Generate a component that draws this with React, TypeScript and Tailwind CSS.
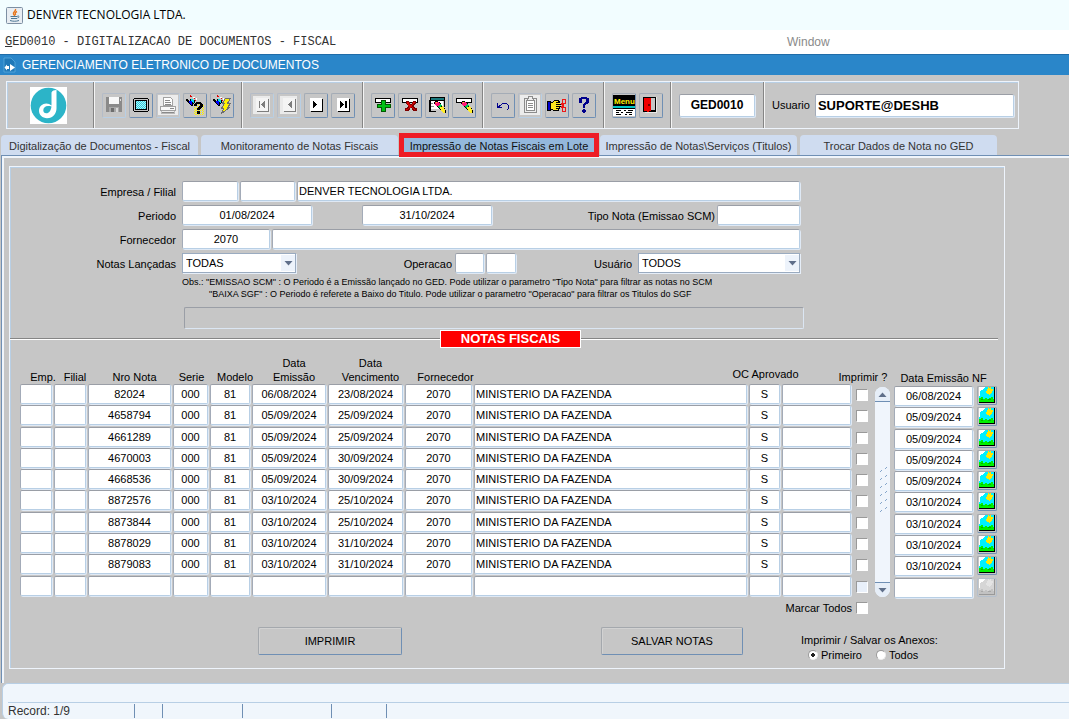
import React from "react";

type Row = {
  nota: string;
  emissao: string;
  vencimento: string;
};

const rows: Row[] = [
  { nota: "82024", emissao: "06/08/2024", vencimento: "23/08/2024" },
  { nota: "4658794", emissao: "05/09/2024", vencimento: "25/09/2024" },
  { nota: "4661289", emissao: "05/09/2024", vencimento: "25/09/2024" },
  { nota: "4670003", emissao: "05/09/2024", vencimento: "30/09/2024" },
  { nota: "4668536", emissao: "05/09/2024", vencimento: "30/09/2024" },
  { nota: "8872576", emissao: "03/10/2024", vencimento: "25/10/2024" },
  { nota: "8873844", emissao: "03/10/2024", vencimento: "25/10/2024" },
  { nota: "8878029", emissao: "03/10/2024", vencimento: "31/10/2024" },
  { nota: "8879083", emissao: "03/10/2024", vencimento: "31/10/2024" },
  { nota: "", emissao: "", vencimento: "" },
];

const fieldLook =
  "block min-w-0 rounded-[2px] border border-t-[#9a9ea6] border-l-[#a3abb8] border-r-[#b8cfe5] border-b-[#b8cfe5] bg-white shadow-[1px_1px_0_#dfe9f5] outline-none";

function Field({
  label,
  value = "",
  className = "",
  id,
}: {
  label?: string;
  value?: string;
  className?: string;
  id?: string;
}) {
  return (
    <input
      id={id}
      aria-label={label}
      defaultValue={value}
      className={`${fieldLook} h-[20px] px-[1px] ${className}`}
    />
  );
}

function Svg({ children, size = 20 }: { children: React.ReactNode; size?: number }) {
  return (
    <svg width={size} height={size} viewBox={`0 0 ${size} ${size}`} shapeRendering="crispEdges" aria-hidden="true">
      {children}
    </svg>
  );
}

function ToolButton({ label, off = false, children }: { label: string; off?: boolean; children: React.ReactNode }) {
  const look = off
    ? "border-t-[#b4bcc8] border-l-[#b4bcc8] border-r-[#b8cfe5] border-b-[#b8cfe5]"
    : "border-t-[#a4acb6] border-l-[#a4acb6] border-r-[#6f8fb4] border-b-[#6f8fb4]";
  return (
    <button
      type="button"
      aria-label={label}
      className={`flex h-[25px] w-[24px] shrink-0 items-center justify-center rounded-[2px] border ${look}`}
    >
      {children}
    </button>
  );
}

const SaveIcon = () => (
  <Svg>
    <path d="M2 2h15l1 1v14H2z" fill="#8a8a8a" />
    <rect x="5" y="2" width="10" height="7" fill="#f8f8f8" />
    <rect x="16" y="4" width="1" height="2" fill="#dcdcdc" />
    <rect x="5" y="12" width="10" height="5" fill="#a8a8a8" />
    <rect x="7" y="13" width="3" height="4" fill="#6e6e6e" />
    <rect x="12" y="13" width="2" height="4" fill="#d8d8d8" />
  </Svg>
);
const ScreenIcon = () => (
  <Svg>
    <path d="M3 3h14v1h1v12h-1v1H3v-1H2V4h1z" fill="#000" />
    <rect x="3" y="4" width="14" height="12" fill="#c6c6c6" />
    <rect x="4" y="5" width="12" height="10" fill="#000" />
    <rect x="5" y="6" width="10" height="8" fill="#b4f2f6" />
    <path d="M5 6.500h10M5 8.500h10M5 10.500h10M5 12.500h10" stroke="#29cfe0" strokeDasharray="1 1" />
    <path d="M6 7.500h9M6 9.500h9M6 11.500h9M6 13.500h9" stroke="#29cfe0" strokeDasharray="1 1" />
  </Svg>
);
const PrintIcon = () => (
  <Svg>
    <rect width="20" height="20" fill="#ececec" />
    <path d="M5.500 2.500h7l2 2v6h-9z" fill="#fff" stroke="#a2a2a2" />
    <path d="M7 5.500h5M7 7.500h6M7 9.500h6" stroke="#8a8a8a" />
    <path d="M2.500 11.500h15v4h-15z" fill="#fafafa" stroke="#a2a2a2" />
    <path d="M12 13.500h4M4 17.500h12" stroke="#8a8a8a" />
    <path d="M3.500 16v2.500h13V16" fill="none" stroke="#b8b8b8" />
  </Svg>
);
const Torch = () => (
  <>
    <path d="M1 4h2v1h1v1h1v-2h3v1h2v3h-1v1H8v2H6v-1H5V9H4V8H3V7H2V6H1z" fill="#000" />
    <path d="M4 6h3v4H6V9H5V8H4z" fill="#0000ff" />
    <path d="M6 4h2v1h1v3H8V7H7V6H6z" fill="#00dbe8" />
    <path d="M5 0h1v1h1v1H5zM9 3h1v1H9zM10 5h1v1h-1z" fill="#e00000" />
    <path d="M8 2h2v1H8zM11 3h1v2h-1z" fill="#fff" />
  </>
);
const QueryIcon = () => (
  <Svg>
    <path d="M11.500 9v11M13.500 9v11M15.500 9v11M17.500 9v11M9.500 12v8" stroke="#fff200" strokeDasharray="1 1" />
    <path d="M18.500 10v10M10.500 13v7" stroke="#fff200" strokeDasharray="1 1" />
    <Torch />
    <path d="M9 9h1V8h1V7h5v1h1v1h1v3h-1v1h-1v1h-1v1h-3v-2h1v-1h1v-1h1v-2h-3v2H9zM12 16h3v3h-3z" fill="#000" />
  </Svg>
);
const ExecuteIcon = () => (
  <Svg>
    <Torch />
    <path d="M13.500 3.500h5l-3 5h3l-3 4h2l-8 6 2-5h-2l3-5h-2z" fill="#fff200" stroke="#6e6e6e" />
  </Svg>
);

function NavIcon({ kind, off }: { kind: "first" | "prev" | "next" | "last"; off?: boolean }) {
  const c = off ? "#7d7d7d" : "#000";
  const bar =
    kind === "first" ? <path d="M7 6h1v7H7z" fill={c} /> : kind === "last" ? <path d="M12 6h2v7h-2z" fill={c} /> : null;
  const tri = kind === "first" || kind === "prev" ? "M13 6v7l-4-3.500z" : "M7 6v7l4-3.500z";
  return (
    <Svg>
      {off && <rect x="1" y="1" width="17" height="18" fill="#eaeaea" />}
      <rect x="5" y="4" width="12" height="13" fill={c} />
      <rect x="4" y="3" width="12" height="13" fill={off ? "#f4f4f4" : "#fff"} />
      <path d={tri} fill={c} />
      {bar}
    </Svg>
  );
}

const Strip = () => (
  <>
    <rect x="2" y="3" width="16" height="5" fill="#000" />
    <rect x="3" y="4" width="14" height="3" fill="#fff" />
  </>
);
const InsertIcon = () => (
  <Svg>
    <Strip />
    <path d="M8 5h5v4h5v4h-5v4H8v-4H4V9h4z" fill="#005a00" />
    <path d="M9 6h3v4h5v2h-5v4H9v-4H5v-2h4z" fill="#00c014" />
  </Svg>
);
const DeleteIcon = () => (
  <Svg>
    <Strip />
    <path d="M6 6h3v1h1v2h2V7h1V6h3v3h-1v1h-1v2h1v1h2v3h-4v-1h-1v-2h-2v2H9v1H5v-3h2v-1h1v-2H7V9H6z" fill="#7c0000" />
    <path d="M7 7h2v2h1v1h2V9h1V7h2v1h-1v1h-1v1h-1v2h1v1h1v1h1v1h-1v-1h-1v-1h-1v-1h-1v1H9v1H8v1H6v-1h2v-1h1v-2H8V9H7z" fill="#dc0000" />
  </Svg>
);
const Eraser = () => (
  <>
    <path d="M8 6h3v1h2v1h1v2h1v1h1v1h1v1h1v2h1v3h-3v-1h-1v-1h-1v-1h-1v-1h-1v-1h-1v-1h-1v-1H9v-1H8V9H7V7h1z" fill="#000" />
    <path d="M8 7h4v1h1v2h-1v1H9v-1H8z" fill="#ff1478" />
    <path d="M11 11h1v-1h1V9h1v1h1v1h-1v1h-1v1h-1v-1h-1z" fill="#00c850" />
    <path d="M13 12h2v-1h1v1h1v2h1v4h-2v-1h-1v-1h-1v-2h-1z" fill="#ffee28" />
    <path d="M9 7h1v1H9z" fill="#ffe400" />
  </>
);
const ClearBlockIcon = () => (
  <Svg>
    <path d="M3 2h15v10h-1V6H4v10h5v1H2V5h1z" fill="#000" />
    <rect x="4" y="3" width="13" height="2" fill="#18787c" />
    <rect x="4" y="6" width="12" height="8" fill="#fff" />
    <path d="M4 8h2v1H4zM4 11h3v1H4z" fill="#888" />
    <Eraser />
  </Svg>
);
const ClearRecordIcon = () => (
  <Svg>
    <Strip />
    <Eraser />
  </Svg>
);
const UndoIcon = () => (
  <Svg>
    <path d="M4 8h1v3h1v-1h2v1H7v1h2v1H4zM8 9h1V8h5v1h1v1h1v4h-1v1h-1v-1h1v-4h-1V9H9v1H8z" fill="#00008c" />
  </Svg>
);
const ClipboardIcon = () => (
  <Svg>
    <rect width="20" height="20" fill="#ececec" />
    <rect x="4.500" y="3.500" width="12" height="14" rx="1" fill="none" stroke="#8c8c8c" />
    <rect x="6.500" y="5.500" width="8" height="10" fill="#fff" stroke="#8c8c8c" />
    <path d="M7.500 5.500h6v-2h-1v-2h-4v2h-1z" fill="#eee" stroke="#8c8c8c" />
    <path d="M8 8.500h5M8 10.500h5M8 12.500h5" stroke="#8c8c8c" />
  </Svg>
);
const HandIcon = () => (
  <Svg>
    <path d="M0 6h4v10H0z" fill="#000" />
    <path d="M1 7h2v8H1z" fill="#0000d0" />
    <path d="M4 7h2V6h1V5h5v1h1v3h1v1h-1v4h-1v2H6v-1H4z" fill="#000" />
    <path d="M4 8h2V7h1V6h4v1H9v1h4v1H9v1h4v1H9v1h3v1H9v1h2v1H6v-1H4z" fill="#ffe81e" />
    <path d="M13 9h2v1h-2zM13 11h2v1h-2z" fill="#000" />
    <path d="M15.500 4.500h3v4h-3zM15.500 12.500h3v4h-3zM14 8l3 4M14 13l3-4" fill="none" stroke="#ee1818" />
  </Svg>
);
const HelpIcon = () => (
  <Svg>
    <path d="M5 3h2V2h6v1h2v5h-1v1h-2v1h-1v3H9V9h1V8h1V7h1V4H8v4H5zM8 15h1v-1h2v1h1v2h-1v1H9v-1H8z" fill="#00008c" />
  </Svg>
);
const MenuIcon = () => (
  <svg width="22" height="21" viewBox="0 0 22 21" className="shrink-0" aria-hidden="true">
    <rect width="22" height="11" fill="#000" />
    <rect y="11" width="22" height="10" fill="#fff" />
    <rect y="11" width="22" height="2" fill="#00c8c8" />
    <text x="1" y="9" fontSize="8" fontWeight="700" fontFamily="Liberation Sans, sans-serif" fill="#fff200">
      Menu
    </text>
    <path d="M0 13.500h22M3 15.500h5M11 15.500h2M15 15.500h5M3 17.500h3M8 17.500h2M13 17.500h6M3 19.500h5M12 19.500h2M16 19.500h3" stroke="#000" shapeRendering="crispEdges" />
  </svg>
);
const ExitIcon = () => (
  <Svg>
    <rect x="2" y="2" width="13" height="15" fill="#000" />
    <rect x="9" y="3" width="5" height="12" fill="#c6c6c6" />
    <path d="M3 3h7v13H8v1H6v-1H3z" fill="#f00000" />
    <path d="M7 9h2v2H7z" fill="#700000" />
    <path d="M15 2h1v16H4v-1h11z" fill="#e8e8e8" />
  </Svg>
);

function PictureIcon({ off }: { off: boolean }) {
  return (
    <Svg size={16}>
      <rect width="16" height="16" fill={off ? "#999" : "#000"} />
      <rect width="15" height="15" fill={off ? "#d6d6d6" : "#00f0ff"} />
      <path d="M0 0h6v1H5v1H4v1H2v1H1v2H0zM0 6h1v3H0z" fill="#fff" />
      <path d="M8 2h1V0h1v1h1V0h1v2h2v2h-1v2h-1v1h-1v1h-1V7H8V6H7V4h1z" fill={off ? "#e4e4e4" : "#ffe800"} />
      <path d="M0 11h2v-1h2v2h2v-1h2v1h2v-1h2v-1h2v2h1v3H0z" fill={off ? "#c2c2c2" : "#00f000"} />
      <path d="M2 12h2v1H2zM9 12h3v1H9z" fill={off ? "#a8a8a8" : "#00b400"} />
    </Svg>
  );
}

function JavaIcon() {
  return (
    <svg width="17" height="17" viewBox="0 0 17 17" aria-hidden="true">
      <rect x=".5" y=".5" width="16" height="16" rx="1" fill="#e8edf2" stroke="#7d8fa3" />
      <path d="M9.500 2c1 2-3 3-2 5 .4.800 1.200 1 1 2M11 4.500c-2 1-2.200 2-1.200 3.500" fill="none" stroke="#e8761c" strokeWidth="1.400" />
      <path d="M4.500 9.500h7M5 11.500h6M4 13.500c3 1 6 1 9 0M11.500 9c2-.4 2 1.600 0 2" fill="none" stroke="#4d7896" />
    </svg>
  );
}

function DenverLogo() {
  return (
    <svg width="37" height="37" viewBox="0 0 37 37" role="img" aria-label="Denver">
      <rect width="37" height="37" fill="#fff" />
      <circle cx="18.500" cy="18.500" r="17.800" fill="#2cb4c8" />
      <path d="M21.500 5.500c1-2 3-2.600 5-2.500v18.500c0 5-3.500 9.700-9.500 9.700-4.500 0-8-3-8-7.400 0-4.300 3.500-7.300 7.300-7.300 2 0 3.700.7 5.200 2z" fill="#fff" />
      <path d="M21.500 19.500c-.6 4-2.500 6.800-5.200 6.800-1.900 0-3-1.300-3-3 0-2.400 2-4.300 4.700-4.300 1.300 0 2.500.1 3.500.5z" fill="#2cb4c8" />
    </svg>
  );
}

function Caret({ up = false }: { up?: boolean }) {
  return (
    <svg width="9" height="5" viewBox="0 0 9 5" aria-hidden="true">
      <path d={up ? "M0.500 5h8L4.500 0.500z" : "M0.500 0h8L4.500 4.500z"} fill="#5f6f8a" />
    </svg>
  );
}

function SelectBox({ id, value, className }: { id: string; value: string; className: string }) {
  return (
    <div className={`relative ${className}`}>
      <select
        id={id}
        defaultValue={value}
        className="block h-[20px] w-full appearance-none border border-[#9aabc0] bg-white pl-[3px] shadow-[1px_1px_0_#e6eef8] outline-none"
      >
        <option>{value}</option>
      </select>
      <span className="pointer-events-none absolute top-[2px] right-[1px] flex h-[16px] w-[14px] items-center justify-center bg-[#edf3fb]">
        <Caret />
      </span>
    </div>
  );
}

const tabs = [
  "Digitalização de Documentos - Fiscal",
  "Monitoramento de Notas Fiscais",
  "Impressão de Notas Fiscais em Lote",
  "Impressão de Notas\\Serviços (Titulos)",
  "Trocar Dados de Nota no GED",
];

const groupLook = "flex items-center gap-[3px] border-l border-[#858585] pl-[8px] shadow-[inset_1px_0_0_#f4f4f4]";
const labelLook = "pt-[3px] text-right whitespace-nowrap";
const actionLook =
  "h-[28px] rounded-[2px] border border-t-[#a4a8ad] border-l-[#a4a8ad] border-r-[#6f8fb4] border-b-[#6f8fb4] shadow-[inset_1px_1px_0_#d2d2d2]";
const checkLook =
  "block size-[12px] appearance-none border border-t-[#999] border-l-[#999] border-r-white border-b-white checked:bg-[#5f6f8a]";
const radioLook =
  "size-[10px] appearance-none rounded-full border border-t-[#999] border-r-[#eee] border-b-[#eee] border-l-[#999] bg-white checked:bg-[radial-gradient(circle,#222_0_2px,#fff_2px)]";

function Head({ children, className = "" }: { children: React.ReactNode; className?: string }) {
  return (
    <th className={`p-0 align-bottom font-normal ${className}`}>
      <div className="flex justify-center text-center leading-[14px] whitespace-nowrap">{children}</div>
    </th>
  );
}

function Toolbar() {
  return (
    <div className="mt-[6px] mr-[50px] ml-[6px] flex h-[48px] border border-[#eef4fc] shadow-[inset_1px_1px_0_#b8cfe5]" role="toolbar" aria-label="Ferramentas">
      <div className="flex w-[86px] shrink-0 items-center justify-center pr-[4px]">
        <DenverLogo />
      </div>
      <div className={`${groupLook} pr-[7px]`}>
        <ToolButton label="Salvar" off><SaveIcon /></ToolButton>
        <ToolButton label="Tela"><ScreenIcon /></ToolButton>
        <ToolButton label="Imprimir tela" off><PrintIcon /></ToolButton>
        <ToolButton label="Entrar consulta"><QueryIcon /></ToolButton>
        <ToolButton label="Executar consulta"><ExecuteIcon /></ToolButton>
      </div>
      <div className={`${groupLook} pr-[7px]`}>
        <ToolButton label="Primeiro registro" off><NavIcon kind="first" off /></ToolButton>
        <ToolButton label="Registro anterior" off><NavIcon kind="prev" off /></ToolButton>
        <ToolButton label="Próximo registro"><NavIcon kind="next" /></ToolButton>
        <ToolButton label="Último registro"><NavIcon kind="last" /></ToolButton>
      </div>
      <div className={`${groupLook} pr-[6px]`}>
        <ToolButton label="Inserir"><InsertIcon /></ToolButton>
        <ToolButton label="Excluir"><DeleteIcon /></ToolButton>
        <ToolButton label="Limpar bloco"><ClearBlockIcon /></ToolButton>
        <ToolButton label="Limpar registro"><ClearRecordIcon /></ToolButton>
      </div>
      <div className={`${groupLook} pr-[7px]`}>
        <ToolButton label="Desfazer"><UndoIcon /></ToolButton>
        <ToolButton label="Lista" off><ClipboardIcon /></ToolButton>
        <ToolButton label="Editar"><HandIcon /></ToolButton>
        <ToolButton label="Ajuda"><HelpIcon /></ToolButton>
      </div>
      <div className={`${groupLook} pr-[7px]`}>
        <ToolButton label="Menu"><MenuIcon /></ToolButton>
        <ToolButton label="Sair"><ExitIcon /></ToolButton>
      </div>
      <div className={`${groupLook} pr-[8px]`}>
        <input aria-label="Programa" defaultValue="GED0010" className={`${fieldLook} h-[23px] w-[76px] text-center text-[12px] font-bold`} />
      </div>
      <div className={`${groupLook} min-w-0 flex-1 pr-[4px]`}>
        <label htmlFor="usuario-logado">Usuario</label>
        <input id="usuario-logado" defaultValue="SUPORTE@DESHB" className={`${fieldLook} ml-[2px] h-[23px] w-0 flex-1 px-[2px] text-[13px] font-bold`} />
      </div>
    </div>
  );
}

function Filters() {
  return (
    <div className="flex flex-col gap-[4px] pt-[14px] pr-[204px]">
      <div className="flex h-[20px]">
        <label htmlFor="empresa" className={`${labelLook} mr-[6px] w-[166px]`}>Empresa / Filial</label>
        <Field id="empresa" className="w-[56px]" />
        <Field label="Filial" className="ml-[2px] w-[55px]" />
        <Field label="Nome da empresa" value="DENVER TECNOLOGIA LTDA." className="ml-[2px] flex-1" />
      </div>
      <div className="flex h-[20px]">
        <label htmlFor="periodo" className={`${labelLook} mr-[6px] w-[166px]`}>Periodo</label>
        <Field id="periodo" value="01/08/2024" className="w-[130px] text-center" />
        <Field label="Periodo final" value="31/10/2024" className="ml-[50px] w-[130px] text-center" />
        <label htmlFor="tipo" className={`${labelLook} mr-[2px] ml-auto`}>Tipo Nota (Emissao SCM)</label>
        <Field id="tipo" className="w-[83px]" />
      </div>
      <div className="flex h-[20px]">
        <label htmlFor="fornecedor" className={`${labelLook} mr-[6px] w-[166px]`}>Fornecedor</label>
        <Field id="fornecedor" value="2070" className="w-[88px] text-center" />
        <Field label="Nome do fornecedor" className="ml-[2px] flex-1" />
      </div>
      <div className="flex h-[20px]">
        <label htmlFor="lancadas" className={`${labelLook} mr-[6px] w-[166px]`}>Notas Lançadas</label>
        <SelectBox id="lancadas" value="TODAS" className="w-[114px]" />
        <label htmlFor="operacao" className={`${labelLook} mr-[3px] w-[156px]`}>Operacao</label>
        <Field id="operacao" className="w-[29px]" />
        <Field label="Operacao final" className="ml-[2px] w-[30px]" />
        <label htmlFor="usuario" className={`${labelLook} mr-[6px] ml-auto`}>Usuário</label>
        <SelectBox id="usuario" value="TODOS" className="w-[162px]" />
      </div>
    </div>
  );
}

function NotesTable() {
  return (
    <div className="mt-[8px] flex h-[241px] pr-[5px] pl-[10px]">
      <div className="min-w-0 flex-1">
        <table className="h-[241px] w-full table-fixed border-collapse">
          <colgroup>
            <col className="w-[34px]" />
            <col className="w-[34px]" />
            <col className="w-[85px]" />
            <col className="w-[37px]" />
            <col className="w-[42px]" />
            <col className="w-[76px]" />
            <col className="w-[77px]" />
            <col className="w-[69px]" />
            <col />
            <col className="w-[33px]" />
            <col className="w-[71px]" />
            <col className="w-[20px]" />
          </colgroup>
          <thead>
            <tr className="h-[28px]">
              <Head className="pl-[12px]">Emp.</Head>
              <Head className="pl-[8px]">Filial</Head>
              <Head className="pl-[8px]">Nro Nota</Head>
              <Head>Serie</Head>
              <Head className="pl-[8px]">Modelo</Head>
              <Head className="pl-[8px]">Data<br />Emissão</Head>
              <Head className="pl-[8px]">Data<br />Vencimento</Head>
              <Head className="pl-[12px]">Fornecedor</Head>
              <th aria-label="Nome do fornecedor" />
              <Head className="pb-[3px]">OC Aprovado</Head>
              <th aria-label="Situação" />
              <Head>Imprimir ?</Head>
            </tr>
          </thead>
          <tbody>
            {rows.map((r, i) => {
              const on = r.nota !== "";
              const cells = [
                { v: "", l: "Empresa" },
                { v: "", l: "Filial" },
                { v: r.nota, l: "Nro Nota" },
                { v: on ? "000" : "", l: "Serie" },
                { v: on ? "81" : "", l: "Modelo" },
                { v: r.emissao, l: "Data Emissão" },
                { v: r.vencimento, l: "Data Vencimento" },
                { v: on ? "2070" : "", l: "Fornecedor" },
                { v: on ? "MINISTERIO DA FAZENDA" : "", l: "Nome do fornecedor" },
                { v: on ? "S" : "", l: "OC Aprovado" },
                { v: "", l: "Situação" },
              ];
              return (
                <tr key={i}>
                  {cells.map((c, j) => (
                    <td key={j} className="p-0 pr-[2px] align-top">
                      <Field label={`${c.l} ${i + 1}`} value={c.v} className={j === 8 ? "w-full" : "w-full text-center"} />
                    </td>
                  ))}
                  <td className="p-0 pt-[5px] pl-[3px] align-top">
                    <input
                      type="checkbox"
                      aria-label={`Imprimir ${i + 1}`}
                      disabled={!on}
                      className={`${checkLook} ${on ? "bg-white" : "bg-[#e9f0fa]"}`}
                    />
                  </td>
                </tr>
              );
            })}
          </tbody>
        </table>
      </div>
      <div className="mt-[31px] mr-[4px] ml-[2px] flex w-[15px] shrink-0 flex-col justify-between overflow-hidden rounded-full bg-[#f0f5fc]">
        <button type="button" aria-label="Subir" className="flex h-[15px] items-center justify-center border-b border-[#6f8fb4] bg-[#e6eef8]">
          <Caret up />
        </button>
        <svg width="15" height="52" viewBox="0 0 15 52" aria-hidden="true">
          {[0, 8, 16, 24, 32, 40].map((y) => (
            <path key={y} d={`M5 ${y + 6}l2-2M10 ${y + 3}l2-2`} stroke="#86a6ca" />
          ))}
        </svg>
        <button type="button" aria-label="Descer" className="flex h-[15px] items-center justify-center border-t border-[#6f8fb4] bg-[#e6eef8]">
          <Caret />
        </button>
      </div>
      <div className="w-[105px] shrink-0 pt-[2px]">
        <table className="h-[241px] w-full table-fixed border-collapse">
          <colgroup>
            <col className="w-[83px]" />
            <col className="w-[22px]" />
          </colgroup>
          <thead>
            <tr className="h-[28px]">
              <th colSpan={2} className="p-0 pr-[6px] pb-[1px] align-bottom leading-[14px] font-normal">Data Emissão NF</th>
            </tr>
          </thead>
          <tbody>
            {rows.map((r, i) => (
              <tr key={i}>
                <td className="p-0 pr-[4px] align-top">
                  <Field label={`Data Emissão NF ${i + 1}`} value={r.emissao} className="w-full text-center" />
                </td>
                <td className="p-0 align-top">
                  <button
                    type="button"
                    aria-label={`Ver nota ${i + 1}`}
                    disabled={!r.nota}
                    className="flex h-[19px] w-[20px] items-start rounded-[2px] border border-t-[#a4a8ad] border-l-[#a4a8ad] border-r-[#6f8fb4] border-b-[#6f8fb4] pl-px disabled:border-[#b4bfcc]"
                  >
                    <PictureIcon off={!r.nota} />
                  </button>
                </td>
              </tr>
            ))}
          </tbody>
        </table>
      </div>
    </div>
  );
}

function Actions() {
  return (
    <>
      <div className="mt-[4px] flex items-center justify-end pr-[136px]">
        <label htmlFor="marcar" className="mr-[4px] leading-[14px]">Marcar Todos</label>
        <input id="marcar" type="checkbox" className={`${checkLook} bg-white`} />
      </div>
      <div className="mt-[12px] flex items-start pb-[6px] pl-[248px]">
        <button type="button" className={`${actionLook} w-[144px]`}>IMPRIMIR</button>
        <button type="button" className={`${actionLook} ml-[199px] w-[142px]`}>SALVAR NOTAS</button>
        <fieldset className="ml-[58px] pt-[6px]">
          <legend className="float-left leading-[14px]">Imprimir / Salvar os Anexos:</legend>
          <div className="clear-both flex items-center gap-[14px] pt-px pl-[7px]">
            <label className="flex items-center gap-[3px] leading-[14px]">
              <input type="radio" name="anexos" defaultChecked className={radioLook} />
              Primeiro
            </label>
            <label className="flex items-center gap-[3px] leading-[14px]">
              <input type="radio" name="anexos" className={radioLook} />
              Todos
            </label>
          </div>
        </fieldset>
      </div>
    </>
  );
}

export default function App() {
  return (
    <div className="flex min-h-screen flex-col bg-[#c6c6c6] font-['Liberation_Sans',Arial,sans-serif] text-[11px] text-black">
      <header>
        <div className="flex h-[30px] items-center gap-[4px] bg-[#f2fdff] pl-[6px]">
          <JavaIcon />
          <h1 className="font-['Open_Sans','Noto_Sans',sans-serif] text-[12px]">DENVER TECNOLOGIA LTDA.</h1>
        </div>
        <nav className="flex h-[24px] items-center bg-white pl-[5px]">
          <a href="#ged" className="w-[782px] font-['Liberation_Mono',monospace] text-[12px] text-[#333]">
            <span className="underline">G</span>ED0010 - DIGITALIZACAO DE DOCUMENTOS - FISCAL
          </a>
          <a href="#window" className="text-[12px] text-[#8a8a8a]">Window</a>
        </nav>
        <div className="flex h-[21px] items-center gap-[6px] border-t border-[#1f6ca8] bg-[#2a86c9] pl-[3px] text-[12px] text-white">
          <svg width="13" height="16" viewBox="0 0 13 16" aria-hidden="true">
            <path d="M1 1h7l4 4v10H1z" fill="#1f78b8" stroke="#5fb0e0" strokeWidth=".7" />
            <path d="M1.500 10.500l2.500-3v1.500h2v3H4v1.500z" fill="#fff" />
            <path d="M7 7l5 3.500L7 14z" fill="#fff" />
          </svg>
          <h2>GERENCIAMENTO ELETRONICO DE DOCUMENTOS</h2>
        </div>
      </header>

      <Toolbar />

      <div role="tablist" className="mt-[6px] flex gap-[3px] pl-[1px]">
        {tabs.map((t, i) => (
          <button
            key={t}
            type="button"
            role="tab"
            aria-selected={i === 2}
            className={
              i === 2
                ? "relative z-10 h-[20px] w-[196px] bg-[#94b8dc] pt-[2px] text-[#111] outline-5 -outline-offset-3 outline-[#ee1c25]"
                : "h-[20px] w-[197px] rounded-t-[4px] bg-[#cfdcf0] pt-[2px] text-[#333]"
            }
          >
            {t}
          </button>
        ))}
      </div>

      <main className="ml-px flex-1 border-t border-l border-[#6f8fb4] pt-[10px] pb-[14px] pl-[7px] shadow-[inset_2px_2px_0_#f0f5fb]">
        <section className="mr-[64px] border border-[#eef4fc] shadow-[inset_1px_1px_0_#b8cfe5]">
          <Filters />
          <div className="pt-[3px] pl-[172px] text-[9px] leading-[12px]">
            <p>Obs.: "EMISSAO SCM" : O Periodo é a Emissão lançado no GED. Pode utilizar o parametro "Tipo Nota" para filtrar as notas no SCM</p>
            <p className="pl-[27px]">"BAIXA SGF" : O Periodo é referete a Baixo do Titulo. Pode utilizar o parametro "Operacao" para filtrar os Titulos do SGF</p>
          </div>
          <div className="mt-[7px] mr-[200px] ml-[174px] h-[22px] rounded-[2px] border border-t-[#9a9ea6] border-l-[#9a9ea6] border-r-[#dbe6f3] border-b-[#dbe6f3]" />
          <div className="mt-px mr-[6px] flex items-center">
            <div className="h-[2px] w-[430px] border-t border-[#858585] bg-white" />
            <h3 className="flex h-[18px] w-[141px] items-center justify-center border border-white bg-[#fe0000] text-[13px] font-bold text-white">NOTAS FISCAIS</h3>
            <div className="h-[2px] flex-1 border-t border-[#858585] bg-white" />
          </div>
          <NotesTable />
          <Actions />
        </section>
      </main>

      <footer className="ml-[2px] flex h-[36px] flex-col rounded-l-[6px] border-t border-l border-[#b8cfe5] bg-[#f0f6fc]">
        <div className="ml-[5px] h-[19px] border-b border-[#b8cfe5]" />
        <div className="flex h-[16px] items-center pl-[5px] text-[12px] leading-[16px] text-[#333]">
          <span className="w-[126px]">Record: 1/9</span>
          <span className="h-[14px] w-[28px] border-l border-[#6f8fb4]" />
          <span className="h-[14px] w-[80px] border-l border-[#6f8fb4]" />
          <span className="h-[14px] w-[89px] border-l border-[#6f8fb4]" />
          <span className="h-[14px] w-[55px] border-l border-[#6f8fb4]" />
          <span className="h-[14px] flex-1 border-l border-[#6f8fb4]" />
        </div>
      </footer>
    </div>
  );
}
